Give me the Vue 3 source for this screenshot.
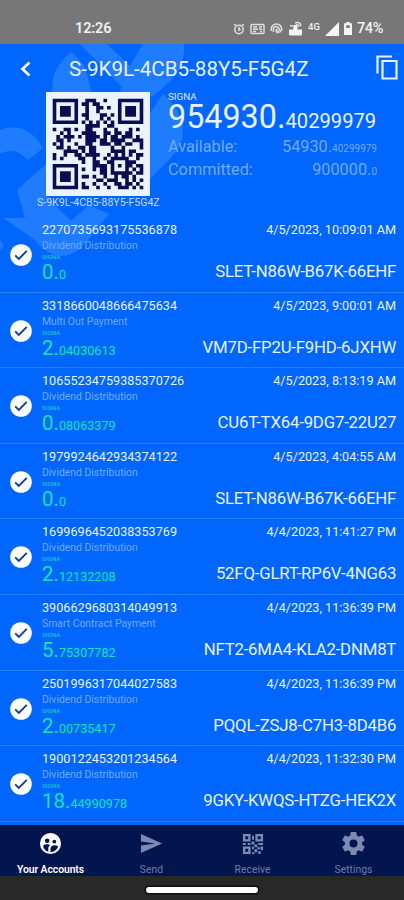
<script setup>
const rows = [
  { id: '2270735693175536878', type: 'Dividend Distribution', whole: '0.', frac: '0', date: '4/5/2023, 10:09:01 AM', address: 'SLET-N86W-B67K-66EHF' },
  { id: '3318660048666475634', type: 'Multi Out Payment', whole: '2.', frac: '04030613', date: '4/5/2023, 9:00:01 AM', address: 'VM7D-FP2U-F9HD-6JXHW' },
  { id: '10655234759385370726', type: 'Dividend Distribution', whole: '0.', frac: '08063379', date: '4/5/2023, 8:13:19 AM', address: 'CU6T-TX64-9DG7-22U27' },
  { id: '1979924642934374122', type: 'Dividend Distribution', whole: '0.', frac: '0', date: '4/5/2023, 4:04:55 AM', address: 'SLET-N86W-B67K-66EHF' },
  { id: '1699696452038353769', type: 'Dividend Distribution', whole: '2.', frac: '12132208', date: '4/4/2023, 11:41:27 PM', address: '52FQ-GLRT-RP6V-4NG63' },
  { id: '3906629680314049913', type: 'Smart Contract Payment', whole: '5.', frac: '75307782', date: '4/4/2023, 11:36:39 PM', address: 'NFT2-6MA4-KLA2-DNM8T' },
  { id: '2501996317044027583', type: 'Dividend Distribution', whole: '2.', frac: '00735417', date: '4/4/2023, 11:36:39 PM', address: 'PQQL-ZSJ8-C7H3-8D4B6' },
  { id: '1900122453201234564', type: 'Dividend Distribution', whole: '18.', frac: '44990978', date: '4/4/2023, 11:32:30 PM', address: '9GKY-KWQS-HTZG-HEK2X' }
]

const modules = [
  '#######..###..#...#######',
  '#.....#.##.##.....#.....#',
  '#.###.#..#..##.#..#.###.#',
  '#.###.#..#..#.....#.###.#',
  '#.###.#.##...##.#.#.###.#',
  '#.....#..#...#.#..#.....#',
  '#######.#.#.#.#.#.#######',
  '.........####..##........',
  '#..##.#..##...#..#...#.#.',
  '..#.#...####..##.##.##...',
  '.#.###.#.####.#.##.###.#.',
  '.##.#....###.##.####..###',
  '#.#...#..##..###.##.##..#',
  '.##.#..##.##....#..#....#',
  '...####.#.##....####.##..',
  '#..#..##.####..#.#.#.#.##',
  '#.#....##..#..#.#####..#.',
  '........#..##..##...###..',
  '#######....####.#.#.##.##',
  '#.....#.#..#.##.#...#.#.#',
  '#.###.#......##.######.##',
  '#.###.#.##.#..#..#.##.#..',
  '#.###.#.....##.###..#.#.#',
  '#.....#.#..#..#..##.##.#.',
  '#######.##..#..#..###.#.#'
]
const qrPath = modules
  .map((line, y) => [...line].map((c, x) => (c === '#' ? `M${x} ${y}h1v1h-1z` : '')).join(''))
  .join('')
</script>

<template>
  <div class="phone">
    <div class="status">
      <span class="clock">12:26</span>
      <div class="indicators">
        <svg class="i-alarm" viewBox="0 0 12 12"><circle cx="6" cy="6.5" r="4.2" /><path d="M6 4v3l1.700-.8M1 2.500 3 1M11 2.500 9 1" /></svg>
        <svg class="i-card" viewBox="0 0 15 12"><rect x="1" y="1.500" width="13" height="9" rx="1" /><path d="M3 4h4M3 6.300h5M3 8.500h3M9 4h3M9 6.300h3M10 8.500h2" /></svg>
        <svg class="i-nfc" viewBox="0 0 13 12"><path d="M1.300 8C.5 3 4 1 6.500 1s6 2 5 7M3.500 9C3 5 4.300 3.400 6.300 3.400S9.500 5 10.500 9.500M5.500 7l2 3.500M6.500 5.500 9 10" /></svg>
        <svg class="i-hot" viewBox="0 0 15 15"><path class="fill" d="M1 8.500h13V13q0 1.500-1.500 1.500h-10Q1 14.500 1 13zM6 4h3.500v5H5z" /><path d="M2 5q3-1 4 1M7 2q5-2 6 3M8 4q3-1 3 2" /></svg>
        <span class="g4">4G</span>
        <svg class="i-signal" viewBox="0 0 14 14"><path class="fill" d="M14 0v14H0z" /></svg>
        <svg class="i-battery" viewBox="0 0 8 13"><path class="fill" d="M2.300 0h3.400v1.300H8V13H0V1.300h2.300zM2.300 3.200V6h3.400V3.200z" fill-rule="evenodd" /></svg>
        <span class="pct">74%</span>
      </div>
    </div>

    <main class="screen">
      <svg class="mark" viewBox="0 44 200 220">
        <path d="M72 52C56 63 50 79 53 96H92L88 78 84 65z" />
        <path d="M80 44h27l23 22 13-22h41c1 18-5 29-17 40l-14 12h-35l4-9z" />
        <path d="M150 113 163 94c14 12 20 25 20 39 0 15-10 23-33 46z" />
        <path d="M0 130c14-6 27-2 36 8l7 10-15 12C20 151 10 148 0 154z" />
        <path d="M17 190 47 163v34l24 24 18-16 20 9-28 34c-9 8-21 10-31 5-6-3-10-7-15-13L3 218h22z" />
        <path d="M0 239v11l4-4z" />
      </svg>

      <header class="title-bar">
        <svg class="back" viewBox="0 0 12 16"><path d="M9.500 1.500 2.500 8l7 6.500" /></svg>
        <h1>S-9K9L-4CB5-88Y5-F5G4Z</h1>
        <svg class="copy" viewBox="0 0 22 25"><path d="M1.500 18.500V1.500H16M6.500 6h14v17.500h-14z" /></svg>
      </header>

      <section class="summary">
        <div class="qr-box">
          <svg class="qr" viewBox="-1.850 -1.850 28.700 28.700" shape-rendering="geometricPrecision">
            <rect class="paper" x="-1.850" y="-1.850" width="28.700" height="28.700" /><path :d="qrPath" />
          </svg>
          <span class="qr-label">S-9K9L-4CB5-88Y5-F5G4Z</span>
        </div>
        <div class="balance">
          <span class="unit">SIGNA</span>
          <div class="total">954930.<small>40299979</small></div>
          <div class="line"><span>Available:</span><span>54930.<small>40299979</small></span></div>
          <div class="line"><span>Committed:</span><span>900000.<small>0</small></span></div>
        </div>
      </section>

      <ul class="list">
        <li v-for="row in rows" :key="row.id">
          <svg class="check" viewBox="0 0 22 22"><circle cx="11" cy="11" r="10.800" /><path d="m5.200 11.300 3.600 3.600 8-8" /></svg>
          <div class="left">
            <span class="id">{{ row.id }}</span>
            <span class="type">{{ row.type }}</span>
            <span class="coin">SIGNA</span>
            <span class="amount">{{ row.whole }}<small>{{ row.frac }}</small></span>
          </div>
          <div class="right">
            <span class="date">{{ row.date }}</span>
            <span class="address">{{ row.address }}</span>
          </div>
        </li>
      </ul>
    </main>

    <nav class="tabs">
      <div class="tab active">
        <svg viewBox="0 0 24 24"><path fill-rule="evenodd" d="M12 1a11 11 0 1 0 0 22 11 11 0 0 0 0-22zM8.500 6.800a2.400 2.400 0 1 1 0 4.800 2.400 2.400 0 0 1 0-4.800zM16 8a2 2 0 1 1 0 4 2 2 0 0 1 0-4zM4.200 14.500c2-2 6-2 7.500-.8-1.500 1-2 2-2 3.500v3.500c-2.800-.8-4.800-3-5.500-6.200zM12 21v-3.500c0-4 5.500-4.500 8-2.500-1.200 3.600-4 5.800-8 6z" /></svg>
        <span>Your Accounts</span>
      </div>
      <div class="tab">
        <svg viewBox="0 0 24 24"><path d="M1 2v8l15 2-15 2v8l22-10z" /></svg>
        <span>Send</span>
      </div>
      <div class="tab">
        <svg viewBox="0 0 24 24"><path fill-rule="evenodd" d="M2 2h8v8H2zM4.500 4.500v3h3v-3zM15 2h8v8h-8zM17.500 4.500v3h3v-3zM2 15h8v8H2zM4.500 17.500v3h3v-3zM11.500 4h2v4h-2zM2 11.500h3v2H2zM7 11.500h3v2H7zM11 10h3v3h-3zM14 13h3v3h-3zM18 11.500h5v2h-5zM11.500 15h2v3h-2zM17 16h3v2h-3zM20.500 15H23v4h-2.500zM14 18h3v3h-3zM11.500 21H14v2h-2.500zM18 20h2.500v3H18z" /></svg>
        <span>Receive</span>
      </div>
      <div class="tab">
        <svg viewBox="2 2 20 20"><path d="M19.430 12.980c.04-.32.07-.64.07-.98s-.03-.66-.07-.98l2.110-1.650c.19-.15.240-.42.120-.64l-2-3.460c-.12-.22-.39-.3-.61-.22l-2.490 1c-.52-.4-1.080-.73-1.690-.98l-.38-2.650A.488.488 0 0 0 14 2h-4c-.25 0-.46.180-.49.420l-.38 2.650c-.61.250-1.170.590-1.690.98l-2.490-1c-.23-.09-.49 0-.61.220l-2 3.460c-.13.220-.07.490.120.640l2.110 1.650c-.04.320-.07.650-.07.980s.03.660.07.980l-2.110 1.650c-.19.150-.24.420-.12.640l2 3.460c.12.220.39.300.61.220l2.490-1c.52.400 1.080.730 1.690.980l.38 2.650c.03.240.24.420.49.420h4c.25 0 .46-.18.49-.42l.38-2.650c.61-.25 1.170-.59 1.690-.98l2.490 1c.23.090.49 0 .61-.22l2-3.460c.12-.22.07-.49-.12-.64zM12 15.500a3.500 3.500 0 1 1 0-7 3.500 3.500 0 0 1 0 7z" fill-rule="evenodd" /></svg>
        <span>Settings</span>
      </div>
    </nav>
    <div class="gesture"><i></i></div>
  </div>
</template>

<style>
body { margin: 0; overflow: hidden; }
</style>

<style scoped>
* { box-sizing: border-box; }
.phone { width: 404px; height: 900px; display: flex; flex-direction: column; font-family: Roboto, "Liberation Sans", sans-serif; color: #eaf2ff; overflow: hidden; }
.status { height: 44px; flex: none; display: flex; justify-content: space-between; align-items: flex-end; background: #777; padding: 0 20px 7px 75px; color: #f2f2f2; }
.clock { font-size: 14.500px; line-height: 17px; font-weight: 600; letter-spacing: -.15px; }
.indicators { display: flex; align-items: center; height: 17px; }
.indicators svg { fill: none; stroke: #dedede; stroke-width: 1.500; flex: none; }
.indicators .fill { fill: #f5f5f5; stroke: none; }
.i-alarm { width: 12px; height: 12px; margin-right: 5px; }
.i-card { width: 15px; height: 12px; margin-right: 5px; }
.i-nfc { width: 13px; height: 12px; margin-right: 5px; }
.i-hot { width: 15px; height: 15px; margin-right: 5px; }
.g4 { font-size: 9.500px; font-weight: 500; line-height: 10px; margin: -4px 5px 0 0; width: 12px; }
.i-signal { width: 14px; height: 14px; margin-right: 5px; }
.i-battery { width: 8px; height: 13px; margin-right: 5px; }
.pct { font-size: 14.500px; line-height: 17px; font-weight: 500; width: 27px; letter-spacing: -.4px; }

.screen { position: relative; height: 781px; flex: none; background: #0066fe; display: flex; flex-direction: column; }
.mark { position: absolute; left: 0; top: 0; width: 200px; height: 220px; fill: #207cff; }
.title-bar { position: relative; height: 47px; display: flex; align-items: center; padding: 3px 6px 0 20px; }
.back { width: 12px; height: 16px; fill: none; stroke: #fff; stroke-width: 2.600; margin-top: -1px; }
h1 { margin: 0 auto 0 37px; font-size: 20.600px; line-height: 28px; font-weight: 400; white-space: nowrap; }
.copy { width: 22px; height: 25px; fill: none; stroke: #e8f0ff; stroke-width: 2.200; margin-top: -4px; }
.summary { position: relative; height: 126px; display: flex; }
.qr-box { width: 168px; padding-left: 46px; display: flex; flex-direction: column; }
.qr { display: block; width: 104px; height: 104px; margin-top: 1px; fill: #0a0d50; }
.paper { fill: #edf3fe; }
.qr-label { margin-left: -9px; font-size: 10.550px; line-height: 13px; white-space: nowrap; color: #c2d9ff; }
.balance { width: 209px; }
.unit { display: block; font-size: 9.800px; line-height: 9px; height: 9px; margin-top: 1px; color: #dce9ff; }
.total { font-size: 32.300px; line-height: 30px; height: 35px; padding-top: 1px; white-space: nowrap; }
.total small { font-size: 20.200px; }
.line { display: flex; justify-content: space-between; height: 22.800px; font-size: 16.300px; line-height: 22px; color: #73a9ff; }
.line small { font-size: 10px; }

.list { position: relative; margin: 0; padding: 0; list-style: none; }
li { height: 75.600px; display: flex; border-bottom: 1.500px solid #2b7eff; padding: 5px 8px 0 10px; }
.check { width: 22px; height: 22px; margin: 22px 10px 0 0; flex: none; fill: #fff; }
.check path { fill: none; stroke: #103b9d; stroke-width: 1.900; }
.left, .right { display: flex; flex-direction: column; white-space: nowrap; }
.right { margin-left: auto; align-items: flex-end; }
.id, .date { font-size: 12.650px; line-height: 16px; }
.type { font-size: 10.400px; line-height: 16px; color: #73aaff; }
.coin { font-size: 6.200px; line-height: 7px; font-weight: 500; color: #11c6cd; }
.amount { font-size: 20.500px; line-height: 22px; color: #10e5b8; }
.amount small { font-size: 12.600px; }
.address { font-size: 16.800px; line-height: 22px; margin-top: 22px; letter-spacing: -.2px; margin-right: -.2px; }

.tabs { height: 51px; flex: none; display: grid; grid-template-columns: repeat(4, 1fr); background: #02154f; color: #6e7bab; }
.tab { display: flex; flex-direction: column; align-items: center; padding-top: 7px; }
.tab svg { width: 23px; height: 23px; fill: #7c89b3; }
.tab span { font-size: 10.400px; line-height: 14px; margin-top: 8px; white-space: nowrap; }
.tab.active { color: #fff; font-weight: 600; }
.tab.active span { letter-spacing: -.08px; }
.tab.active svg { fill: #fff; }
.gesture { height: 24px; flex: none; background: #282828; display: flex; justify-content: center; align-items: center; }
.gesture i { width: 112px; height: 6px; border-radius: 3px; background: #fff; box-shadow: 0 0 0 1.500px #0e0e0e; margin-top: 3px; }
</style>
